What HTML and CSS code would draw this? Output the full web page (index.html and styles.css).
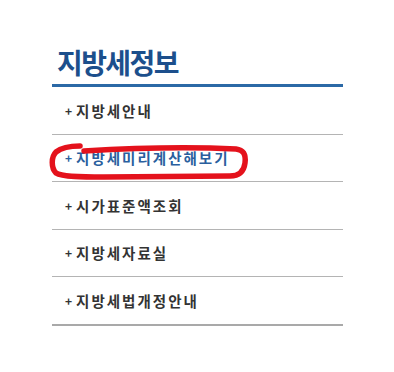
FILE: index.html
```html
<!DOCTYPE html>
<html lang="ko">
<head>
<meta charset="utf-8">
<link rel="stylesheet" href="styles.css">
</head>
<body>
<div class="panel">
  <h1 class="title">지방세정보</h1>
  <ul class="menu">
    <li class="item"><span class="plus">+</span>지방세안내</li>
    <li class="item active"><span class="plus">+</span>지방세미리계산해보기</li>
    <li class="item"><span class="plus">+</span>시가표준액조회</li>
    <li class="item"><span class="plus">+</span>지방세자료실</li>
    <li class="item last"><span class="plus">+</span>지방세법개정안내</li>
  </ul>
  <svg class="scribble" width="208" height="44" viewBox="0 0 208 44">
    <path d="M36 7 C26 7 17 9 12 13 C7 18 7 29 12 34 C18 38 40 38 60 38 L186 37 C196 37 200 32 201 24 C202 16 200 11 192 10 C150 8 90 9 40 12" fill="none" stroke="#e4121c" stroke-width="5.5" stroke-linecap="round" stroke-linejoin="round"/>
  </svg>
</div>
</body>
</html>
```
FILE: styles.css
```css
html, body {
  margin: 0;
  padding: 0;
  background: #ffffff;
}
.panel {
  position: relative;
  margin: 0 0 0 52px;
  padding-top: 40px;
  width: 291px;
  font-family: "Noto Sans CJK KR", "Noto Sans", sans-serif;
}
.title {
  margin: 0;
  padding: 0 0 0 5px;
  font-size: 28px;
  line-height: 44px;
  height: 44px;
  font-weight: 700;
  color: #1c4f8c;
  letter-spacing: -1.6px;
  border-bottom: 3px solid #2b69a6;
}
.menu {
  list-style: none;
  margin: 0;
  padding: 0;
}
.item {
  display: flex;
  align-items: center;
  height: 46.5px;
  border-bottom: 1px solid #b4b4b4;
  padding-left: 13px;
  font-size: 14.5px;
  font-weight: 700;
  color: #333333;
  letter-spacing: 2px;
}
.item.active {
  color: #2a5f9e;
}
.item.last {
  border-bottom: 2px solid #a9a9a9;
}
.plus {
  font-size: 12px;
  margin-right: 4px;
  letter-spacing: 0;
}
.scribble {
  position: absolute;
  left: -8px;
  top: 139px;
}
```
